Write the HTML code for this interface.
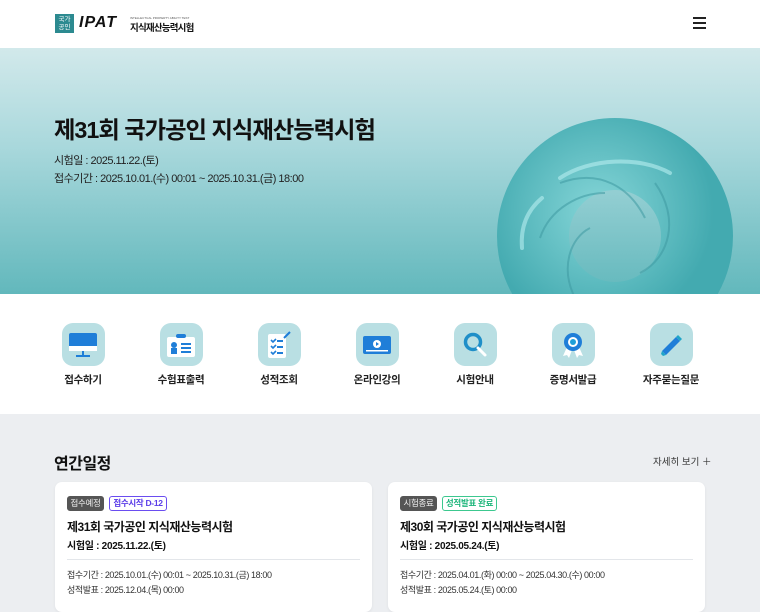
<!DOCTYPE html>
<html><head><meta charset="utf-8"><style>
*{margin:0;padding:0;box-sizing:border-box}
body{width:760px;height:600px;overflow:hidden;font-family:"Liberation Sans","Noto Sans CJK KR",sans-serif;color:#111;background:#eceef1;position:relative}
.hdr{position:absolute;left:0;top:0;width:760px;height:48px;background:#fff}
.hero{position:absolute;left:0;top:48px;width:760px;height:246px;background:linear-gradient(180deg,#d2e9eb 0%,#a9d8dc 40%,#62b8bc 100%);overflow:hidden}
.hero h1{position:absolute;left:54px;top:63px;font-size:23.3px;font-weight:bold;letter-spacing:-1px;color:#111}
.hero p{position:absolute;left:54px;font-size:11px;color:#222;letter-spacing:-0.5px}
.icons{position:absolute;left:0;top:294px;width:760px;height:120px;background:#fff}
.it{position:absolute;top:29px;width:90px;text-align:center;font-size:10.5px;font-weight:bold;color:#222;letter-spacing:-0.3px}
.it .b{width:43px;height:43px;border-radius:11px;background:#b9dfe3;margin:0 auto 6px;display:flex;align-items:center;justify-content:center}
.sec{position:absolute;left:54px;top:450px;font-size:16px;font-weight:bold;letter-spacing:-0.5px}
.more{position:absolute;left:653px;top:454px;font-size:9.5px;color:#333}
.card{position:absolute;top:482px;width:317px;height:130px;background:#fff;border-radius:7px;box-shadow:0 1px 3px rgba(0,0,0,.06)}
.tag{position:absolute;top:14px;height:15px;font-size:8.5px;line-height:13px;border-radius:3px;text-align:center;letter-spacing:-0.3px}
.ct{position:absolute;left:12px;top:36px;font-size:12px;font-weight:bold;letter-spacing:-0.5px}
.cd{position:absolute;left:12px;top:55px;font-size:10px;font-weight:bold;letter-spacing:-0.3px}
.hr{position:absolute;left:12px;right:12px;top:77px;border-top:1px solid #e3e6ea}
.cl{position:absolute;left:12px;font-size:9px;color:#333;letter-spacing:-0.4px}
</style></head><body>
<div class="hdr">
 <div style="position:absolute;left:55px;top:14px;width:19px;height:19px;background:#2c8a90;color:#fff;font-size:6.5px;line-height:8px;text-align:center;padding-top:2px">국가<br>공인</div>
 <div style="position:absolute;left:79px;top:14px;font-size:16px;font-weight:bold;font-style:italic;color:#111;letter-spacing:1px">IPAT</div>
 <div style="position:absolute;left:130px;top:16px;font-size:3px;color:#555">INTELLECTUAL PROPERTY ABILITY TEST</div>
 <div style="position:absolute;left:130px;top:20px;font-size:9.5px;font-weight:bold;letter-spacing:-0.8px">지식재산능력시험</div>
 <div style="position:absolute;left:693px;top:17px;width:13px;height:2px;background:#222;box-shadow:0 5px 0 #222,0 10px 0 #222"></div>
</div>
<div class="hero">
 <svg style="position:absolute;left:480px;top:50px" width="280" height="200" viewBox="0 0 280 200">
  <defs><radialGradient id="g" cx=".4" cy=".35" r=".7"><stop offset="0" stop-color="#86d6d8"/><stop offset="1" stop-color="#43aab0"/></radialGradient></defs>
  <circle cx="135" cy="138" r="82" fill="none" stroke="url(#g)" stroke-width="72"/>
  <g fill="none" stroke="#3f9aa2" stroke-width="2" opacity=".55">
   <path d="M80 85 C120 70 150 90 165 120"/>
   <path d="M175 85 C200 120 190 160 160 175"/>
   <path d="M60 140 C70 110 100 95 125 95"/>
   <path d="M95 200 C80 170 90 140 110 130"/>
  </g>
  <g fill="none" stroke="#b7eef0" stroke-width="4" opacity=".6" stroke-linecap="round">
   <path d="M80 80 C110 60 160 58 190 75"/><path d="M42 150 C40 125 50 110 62 100"/>
  </g>
 </svg>
 <h1>제31회 국가공인 지식재산능력시험</h1>
 <p style="top:104px">시험일 : 2025.11.22.(토)</p>
 <p style="top:122px">접수기간 : 2025.10.01.(수) 00:01 ~ 2025.10.31.(금) 18:00</p>
</div>
<div class="icons">
 <div class="it" style="left:38px"><div class="b"><svg width="30" height="28"><rect x="1" y="2" width="28" height="17" rx="2" fill="#1f7ed8"/><rect x="1" y="15" width="28" height="5" fill="#fff"/><rect x="14" y="20" width="2" height="5" fill="#1f7ed8"/><rect x="8" y="24" width="14" height="2" fill="#1f7ed8"/></svg></div>접수하기</div>
 <div class="it" style="left:136px"><div class="b"><svg width="30" height="26"><rect x="1" y="5" width="28" height="20" rx="2" fill="#fff"/><rect x="10" y="2" width="10" height="4" rx="2" fill="#1f7ed8"/><circle cx="8" cy="13" r="3" fill="#1f7ed8"/><rect x="5" y="16" width="6" height="6" fill="#1f7ed8"/><rect x="15" y="11" width="10" height="2" fill="#1f7ed8"/><rect x="15" y="15" width="10" height="2" fill="#1f7ed8"/><rect x="15" y="19" width="10" height="2" fill="#1f7ed8"/></svg></div>수험표출력</div>
 <div class="it" style="left:234px"><div class="b"><svg width="28" height="30"><rect x="3" y="4" width="18" height="24" rx="2" fill="#fff"/><path d="M6 10l2 2 3-3M6 16l2 2 3-3M6 22l2 2 3-3" stroke="#1f7ed8" stroke-width="1.6" fill="none"/><rect x="12" y="10" width="6" height="2" fill="#1f7ed8"/><rect x="12" y="16" width="6" height="2" fill="#1f7ed8"/><rect x="12" y="22" width="6" height="2" fill="#1f7ed8"/><path d="M19 8l6-6" stroke="#1f7ed8" stroke-width="2"/></svg></div>성적조회</div>
 <div class="it" style="left:332px"><div class="b"><svg width="30" height="24"><rect x="1" y="3" width="28" height="18" rx="2" fill="#1f7ed8"/><circle cx="15" cy="11" r="4" fill="#fff"/><path d="M14 9l3 2-3 2z" fill="#1f7ed8"/><rect x="4" y="17" width="22" height="1.5" fill="#fff"/></svg></div>온라인강의</div>
 <div class="it" style="left:430px"><div class="b"><svg width="30" height="30"><circle cx="13" cy="12" r="7.5" fill="none" stroke="#1f8fc8" stroke-width="3.5"/><path d="M18 18l7 7" stroke="#fff" stroke-width="3" stroke-linecap="round"/></svg></div>시험안내</div>
 <div class="it" style="left:528px"><div class="b"><svg width="30" height="30"><path d="M9 17l-4 9 4-1 2 3 3-8zM21 17l4 9-4-1-2 3-3-8z" fill="#fff"/><circle cx="15" cy="12" r="9" fill="#1f7ed8"/><circle cx="15" cy="12" r="5" fill="#fff"/><circle cx="15" cy="12" r="3" fill="#1f9fd8"/></svg></div>증명서발급</div>
 <div class="it" style="left:626px"><div class="b"><svg width="30" height="30"><path d="M6 21L20 7l4 4L10 25z" fill="#1f7ed8"/><path d="M6 21l4 4-3 1-2-2z" fill="#1fa5c8"/><path d="M20 7l2-2 4 4-2 2z" fill="#1fa5c8"/></svg></div>자주묻는질문</div>
</div>
<div class="sec">연간일정</div>
<div class="more">자세히 보기 ＋</div>
<div class="card" style="left:55px">
 <div class="tag" style="left:12px;width:37px;background:#555;color:#eee;border:1px solid #555">접수예정</div>
 <div class="tag" style="left:54px;width:58px;color:#5a3de8;border:1px solid #6a4df0;font-weight:bold">접수시작 D-12</div>
 <div class="ct">제31회 국가공인 지식재산능력시험</div>
 <div class="cd">시험일 : 2025.11.22.(토)</div>
 <div class="hr"></div>
 <div class="cl" style="top:86px">접수기간 : 2025.10.01.(수) 00:01 ~ 2025.10.31.(금) 18:00</div>
 <div class="cl" style="top:101px">성적발표 : 2025.12.04.(목) 00:00</div>
</div>
<div class="card" style="left:388px">
 <div class="tag" style="left:12px;width:37px;background:#555;color:#eee;border:1px solid #555">시험종료</div>
 <div class="tag" style="left:54px;width:55px;color:#1cb57a;border:1px solid #3cc88f;font-weight:bold">성적발표 완료</div>
 <div class="ct">제30회 국가공인 지식재산능력시험</div>
 <div class="cd">시험일 : 2025.05.24.(토)</div>
 <div class="hr"></div>
 <div class="cl" style="top:86px">접수기간 : 2025.04.01.(화) 00:00 ~ 2025.04.30.(수) 00:00</div>
 <div class="cl" style="top:101px">성적발표 : 2025.05.24.(토) 00:00</div>
</div>
</body></html>
